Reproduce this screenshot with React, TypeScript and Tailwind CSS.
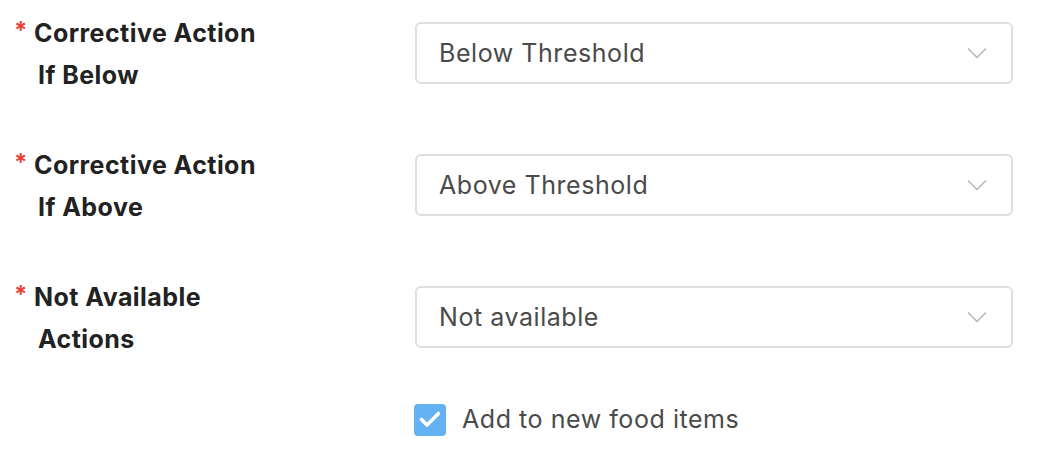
const rows = [
  { first: "Corrective Action", second: "If Below", value: "Below Threshold" },
  { first: "Corrective Action", second: "If Above", value: "Above Threshold" },
  { first: "Not Available", second: "Actions", value: "Not available" },
];

const Chevron = () => (
  <svg width="20" height="12" viewBox="0 0 20 12" fill="none">
    <path d="M1 1.5 L10 10.5 L19 1.5" stroke="#b5b5b5" strokeWidth="1.4" />
  </svg>
);

const App = () => {
  return (
    <div className="w-[1057px] h-[456px] bg-white pl-[14px] pt-3 font-['Inter',sans-serif] overflow-hidden">
      <div className="flex flex-col gap-12">
        {rows.map((row, i) => (
          <div key={i} className="flex items-center h-[84px]">
            {/* label */}
            <div className="w-[401px] flex">
              <span className="w-5 text-[24px] leading-[42px] -mt-[2px] text-[#e8443a] font-bold">*</span>
              <div className="text-[25px] leading-[42px] font-bold text-[#222] tracking-[0.45px]">
                <div>{row.first}</div>
                <div className="ml-1">{row.second}</div>
              </div>
            </div>
            {/* select */}
            <div className="w-[598px] h-[62px] -mt-[3px] border-2 border-[#dedede] rounded-md flex items-center justify-between pl-[22px] pr-6">
              <span className="text-[25px] pt-[3px] text-[#4a4a4a] tracking-[0.55px]">{row.value}</span>
              <Chevron />
            </div>
          </div>
        ))}
      </div>
      <div className="flex items-center gap-4 ml-[400px] mt-[41px]">
        <svg width="32" height="32" viewBox="0 0 32 32">
          <rect width="32" height="32" rx="4" fill="#64b1f4" />
          <path d="M7.5 15.5 L13 21 L24.5 9.5" stroke="white" strokeWidth="3.6" fill="none" strokeLinecap="round" strokeLinejoin="round" />
        </svg>
        <span className="text-[25px] text-[#4a4a4a] tracking-[0.55px]">Add to new food items</span>
      </div>
    </div>
  );
};

export default App;
